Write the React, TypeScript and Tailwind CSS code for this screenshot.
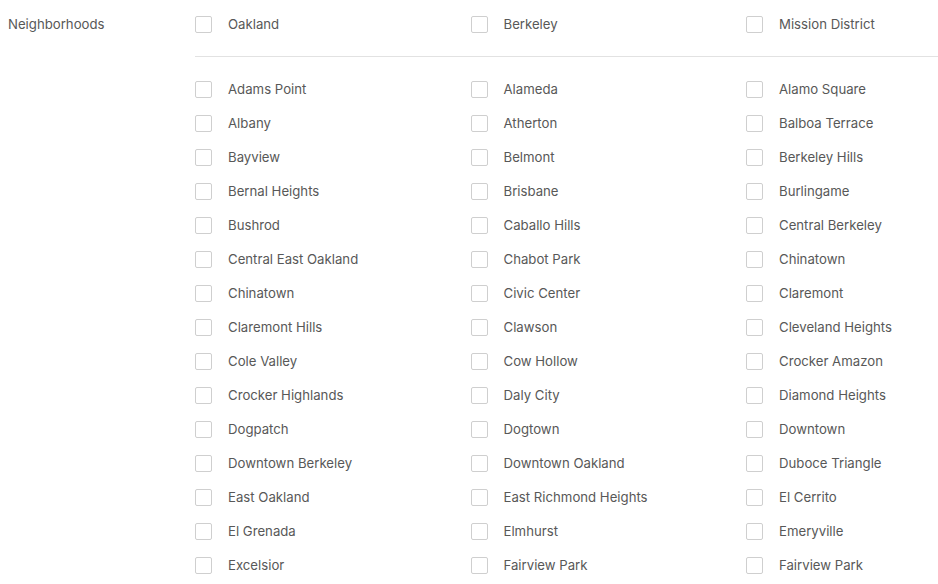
import React from "react";

const top = ["Oakland", "Berkeley", "Mission District"];

const neighborhoods = [
  "Adams Point", "Alameda", "Alamo Square",
  "Albany", "Atherton", "Balboa Terrace",
  "Bayview", "Belmont", "Berkeley Hills",
  "Bernal Heights", "Brisbane", "Burlingame",
  "Bushrod", "Caballo Hills", "Central Berkeley",
  "Central East Oakland", "Chabot Park", "Chinatown",
  "Chinatown", "Civic Center", "Claremont",
  "Claremont Hills", "Clawson", "Cleveland Heights",
  "Cole Valley", "Cow Hollow", "Crocker Amazon",
  "Crocker Highlands", "Daly City", "Diamond Heights",
  "Dogpatch", "Dogtown", "Downtown",
  "Downtown Berkeley", "Downtown Oakland", "Duboce Triangle",
  "East Oakland", "East Richmond Heights", "El Cerrito",
  "El Grenada", "Elmhurst", "Emeryville",
  "Excelsior", "Fairview Park", "Fairview Park",
];

const Option: React.FC<{ label: string }> = ({ label }) => (
  <label className="flex h-[34px] items-center cursor-pointer">
    <span className="w-[17px] h-[17px] rounded-[2px] border border-[#cfcfcf] bg-white shrink-0" />
    <span className="ml-4 pt-[2px] text-[13.2px] text-[#585858] whitespace-nowrap">{label}</span>
  </label>
);

export default function App() {
  return (
    <div
      className="w-[938px] h-[584px] overflow-hidden bg-white flex"
      style={{ fontFamily: "Inter, 'Liberation Sans', sans-serif" }}
    >
      <div className="w-[195px] shrink-0 pl-2 pt-[7px]">
        <div className="h-[34px] pt-[2px] flex items-center text-[13.2px] text-[#585858]">Neighborhoods</div>
      </div>
      <div className="flex-1 pt-[7px]">
        <div className="grid grid-cols-[275.5px_275.5px_1fr]">
          {top.map((n) => (
            <Option key={n} label={n} />
          ))}
        </div>
        <div className="mt-[15px] mb-[15px] h-px bg-[#e2e2e2]" />
        <div className="grid grid-cols-[275.5px_275.5px_1fr]">
          {neighborhoods.map((n, i) => (
            <Option key={i} label={n} />
          ))}
        </div>
      </div>
    </div>
  );
}
